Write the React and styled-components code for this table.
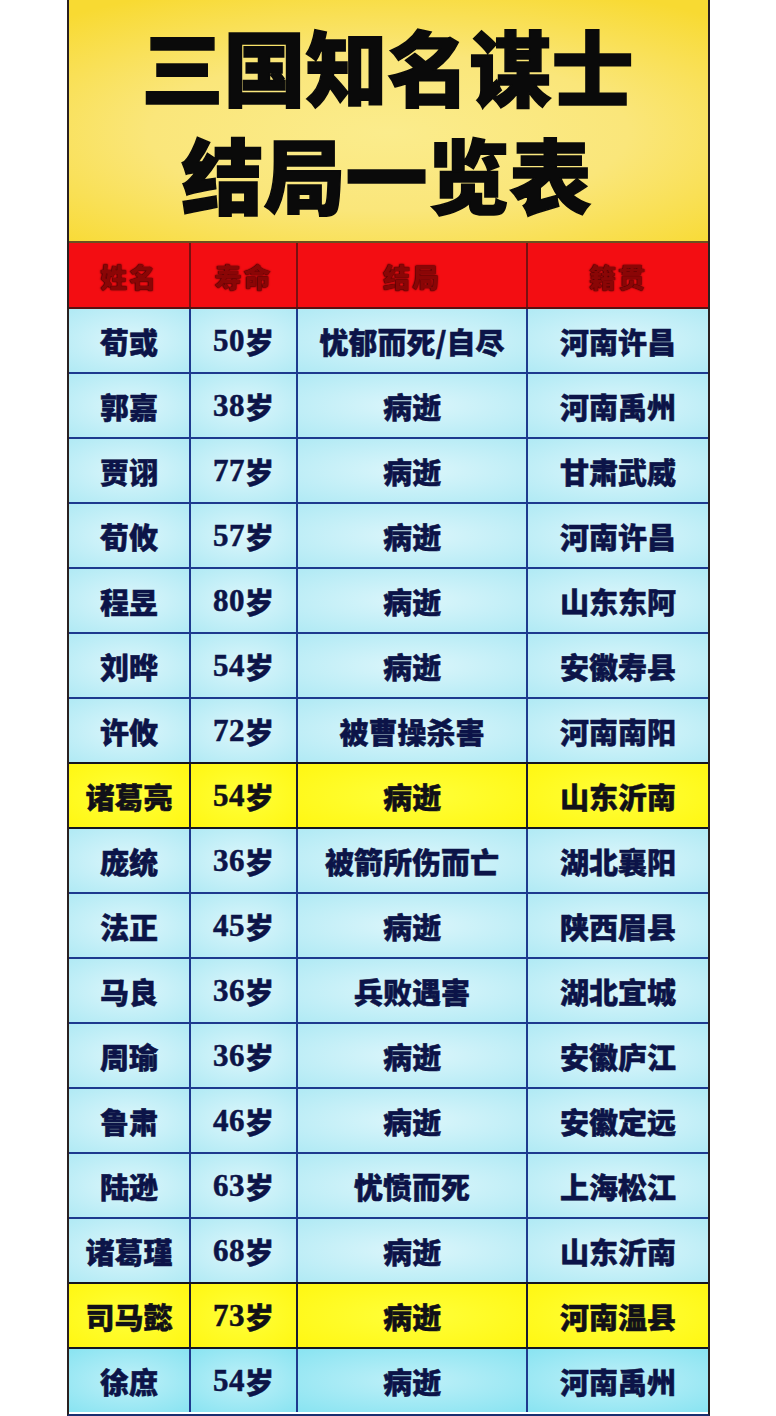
import React from "react";
import styled, { createGlobalStyle } from "styled-components";

const Global = createGlobalStyle`
  html, body { margin: 0; padding: 0; background: #ffffff; }
  body { font-family: "Noto Sans CJK SC", "Noto Sans", sans-serif; }
  * { box-sizing: border-box; }
`;

const Page = styled.div`
  width: 776px;
  display: flex;
  justify-content: center;
  padding-bottom: 2px;
`;

const Sheet = styled.div`
  width: 643px;
  margin-left: 1px;
  display: flex;
  flex-direction: column;
  border-left: 2px solid #2a2020;
  border-right: 2px solid #2a2020;
  border-bottom: 2px solid #1a2f70;
`;

const TitleBlock = styled.div`
  height: 243px;
  background: radial-gradient(ellipse 75% 65% at 50% 55%, #fbec8c 0%, #fae67a 50%, #f8da32 100%);
  display: flex;
  flex-direction: column;
  align-items: center;
  padding-top: 11px;
  border-bottom: 2px solid #6a5020;
`;

const TitleLine = styled.div`
  font-family: "Noto Sans CJK SC", sans-serif;
  font-weight: 900;
  font-size: 82px;
  line-height: 108px;
  color: #0a0a0a;
  -webkit-text-stroke: 1.5px #0a0a0a;
  margin-left: ${(p) => p.$shift || 0}px;
`;

const Row = styled.div`
  display: grid;
  grid-template-columns: 122px 107px 230px 1fr;
  height: ${(p) => p.$h}px;
  border-bottom: 2px solid ${(p) => p.$line};
`;

const HeadCell = styled.div`
  background: #f30d12;
  display: flex;
  align-items: center;
  justify-content: center;
  border-right: 2px solid #7a1010;
  font-family: "Noto Sans CJK SC", sans-serif;
  font-weight: 900;
  font-size: 27px;
  letter-spacing: 2px;
  color: #8a0606;
  text-shadow: 0 0 2px #3a0000, 0 0 1px #3a0000;
  padding-top: 2px;
  &:last-child { border-right: none; }
`;

const Cell = styled.div`
  display: flex;
  align-items: center;
  justify-content: center;
  border-right: 2px solid ${(p) => (p.$yellow ? "#1a1a30" : "#1d3a8e")};
  background: ${(p) =>
    p.$yellow
      ? "radial-gradient(ellipse at 50% 50%, #ffff3a 0%, #fff712 100%)"
      : p.$deep
      ? "radial-gradient(ellipse 80% 70% at 50% 50%, #bff0f8 0%, #86e3f1 100%)"
      : "radial-gradient(ellipse 80% 70% at 50% 50%, #dcf6fb 0%, #aee9f4 100%)"};
  font-family: "Noto Sans CJK SC", sans-serif;
  font-weight: 900;
  font-size: 29px;
  color: ${(p) => (p.$yellow ? "#111018" : "#0c1448")};
  -webkit-text-stroke: 0.5px currentColor;
  padding-top: 1px;
  &:last-child { border-right: none; }
`;

const Num = styled.span`
  font-family: "Liberation Serif", "DejaVu Serif", serif;
  font-weight: 700;
  font-size: 31px;
  letter-spacing: 0.5px;
`;

const data = [
  ["荀或", "50", "忧郁而死/自尽", "河南许昌"],
  ["郭嘉", "38", "病逝", "河南禹州"],
  ["贾诩", "77", "病逝", "甘肃武威"],
  ["荀攸", "57", "病逝", "河南许昌"],
  ["程昱", "80", "病逝", "山东东阿"],
  ["刘晔", "54", "病逝", "安徽寿县"],
  ["许攸", "72", "被曹操杀害", "河南南阳"],
  ["诸葛亮", "54", "病逝", "山东沂南", true],
  ["庞统", "36", "被箭所伤而亡", "湖北襄阳"],
  ["法正", "45", "病逝", "陕西眉县"],
  ["马良", "36", "兵败遇害", "湖北宜城"],
  ["周瑜", "36", "病逝", "安徽庐江"],
  ["鲁肃", "46", "病逝", "安徽定远"],
  ["陆逊", "63", "忧愤而死", "上海松江"],
  ["诸葛瑾", "68", "病逝", "山东沂南"],
  ["司马懿", "73", "病逝", "河南温县", true],
  ["徐庶", "54", "病逝", "河南禹州"],
];

export default function App() {
  return (
    <>
      <Global />
      <Page>
        <Sheet>
          <TitleBlock>
            <TitleLine $shift={-2}>三国知名谋士</TitleLine>
            <TitleLine $shift={-4}>结局一览表</TitleLine>
          </TitleBlock>
          <Row $h={66} $line="#5a1010">
            <HeadCell>姓名</HeadCell>
            <HeadCell>寿命</HeadCell>
            <HeadCell>结局</HeadCell>
            <HeadCell>籍贯</HeadCell>
          </Row>
          {data.map(([name, age, end, home, yellow], i) => {
            const nextYellow = data[i + 1] && data[i + 1][4];
            const line = yellow || nextYellow ? "#141420" : "#1d3a8e";
            const deep = i >= 15;
            return (
              <Row key={name + i} $h={65} $line={i === data.length - 1 ? "transparent" : line}>
                <Cell $yellow={yellow} $deep={deep}>{name}</Cell>
                <Cell $yellow={yellow} $deep={deep}>
                  <Num>{age}</Num>岁
                </Cell>
                <Cell $yellow={yellow} $deep={deep}>{end}</Cell>
                <Cell $yellow={yellow} $deep={deep}>{home}</Cell>
              </Row>
            );
          })}
        </Sheet>
      </Page>
    </>
  );
}
